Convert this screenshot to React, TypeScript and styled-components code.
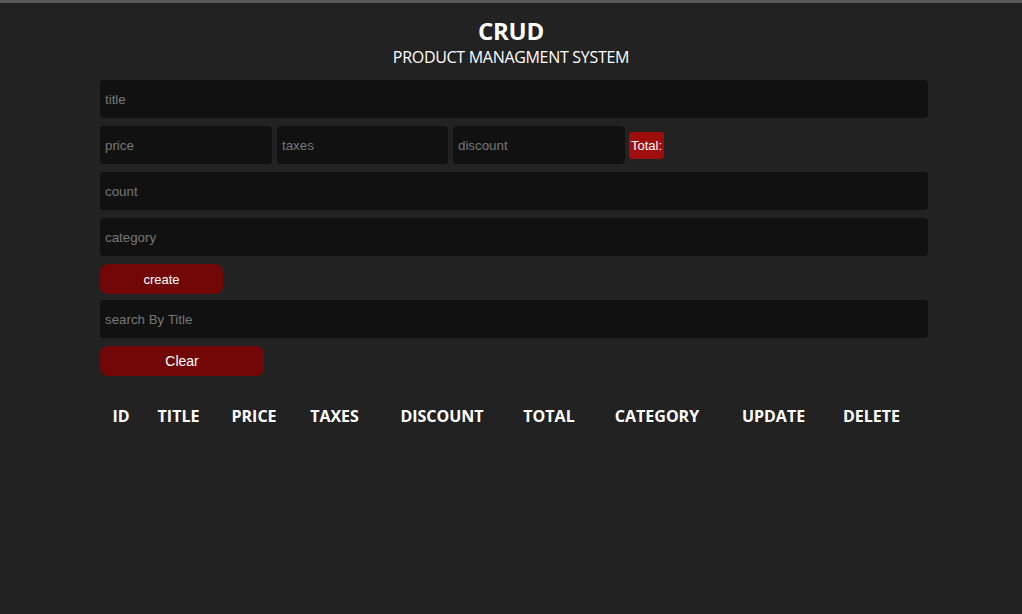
import React from "react";
import styled, { createGlobalStyle } from "styled-components";

const Global = createGlobalStyle`
  html, body { margin: 0; padding: 0; background: #222222; }
  body { font-family: "Liberation Sans", Arial, sans-serif; color: #fff; }
  * { box-sizing: border-box; }
`;

const Page = styled.div`
  min-height: 614px;
  background: #222222;
  border-top: 3px solid #595959;
`;

const Header = styled.header`
  text-align: center;
  padding-top: 13px;
  font-family: "Open Sans", sans-serif;
`;

const Title = styled.h1`
  margin: 0;
  font-size: 24px;
  font-weight: 700;
  line-height: 30px;
  letter-spacing: -0.3px;
`;

const Subtitle = styled.p`
  margin: 1px 0 0;
  font-size: 16px;
  line-height: 20px;
  letter-spacing: -0.3px;
`;

const Container = styled.div`
  width: 828px;
  margin-left: 100px;
  margin-top: 13px;
  display: flex;
  flex-direction: column;
  gap: 8px;
`;

const Input = styled.input<{ $w?: number }>`
  width: ${(p) => (p.$w ? `${p.$w}px` : "100%")};
  height: 38px;
  background: #111111;
  border: none;
  border-radius: 4px;
  outline: none;
  color: #ddd;
  padding: 0 5px;
  font-family: "Liberation Sans", Arial, sans-serif;
  font-size: 13.33px;
  &::placeholder { color: #777; }
`;

const PriceRow = styled.div`
  display: flex;
  align-items: center;
  gap: 5px;
`;

const Total = styled.small`
  background: #a00d0d;
  color: #fff;
  font-size: 13px;
  height: 27px;
  line-height: 27px;
  padding: 0 2px;
  border-radius: 4px;
  margin-left: -1px;
`;

const Button = styled.button<{ $w: number; $after?: number }>`
  width: ${(p) => p.$w}px;
  height: 30px;
  margin-bottom: ${(p) => (p.$after ?? 0)}px;
  background: #720707;
  color: #fff;
  border: none;
  border-radius: 8px;
  font-family: "Liberation Sans", Arial, sans-serif;
  font-size: 13px;
  cursor: pointer;
`;

const ClearButton = styled(Button)`
  font-size: 14px;
`;

const TableHead = styled.div`
  display: grid;
  grid-template-columns: 42px 73px 78px 83px 132px 82px 134px 99px 97px;
  margin-top: 17px;
  font-family: "Open Sans", sans-serif;
  font-weight: 700;
  font-size: 16px;
`;

const Th = styled.div`
  text-align: center;
  line-height: 30px;
`;

const cols = ["ID", "TITLE", "PRICE", "TAXES", "DISCOUNT", "TOTAL", "CATEGORY", "UPDATE", "DELETE"];

export default function App() {
  return (
    <>
      <Global />
      <Page>
        <Header>
          <Title>CRUD</Title>
          <Subtitle>PRODUCT MANAGMENT SYSTEM</Subtitle>
        </Header>
        <Container>
          <Input placeholder="title" />
          <PriceRow>
            <Input $w={172} placeholder="price" />
            <Input $w={171} placeholder="taxes" />
            <Input $w={172} placeholder="discount" />
            <Total>Total:</Total>
          </PriceRow>
          <Input placeholder="count" />
          <Input placeholder="category" />
          <Button $w={123} $after={-2}>create</Button>
          <Input placeholder="search By Title" />
          <ClearButton $w={164}>Clear</ClearButton>
          <TableHead>
            {cols.map((c) => (
              <Th key={c}>{c}</Th>
            ))}
          </TableHead>
        </Container>
      </Page>
    </>
  );
}
